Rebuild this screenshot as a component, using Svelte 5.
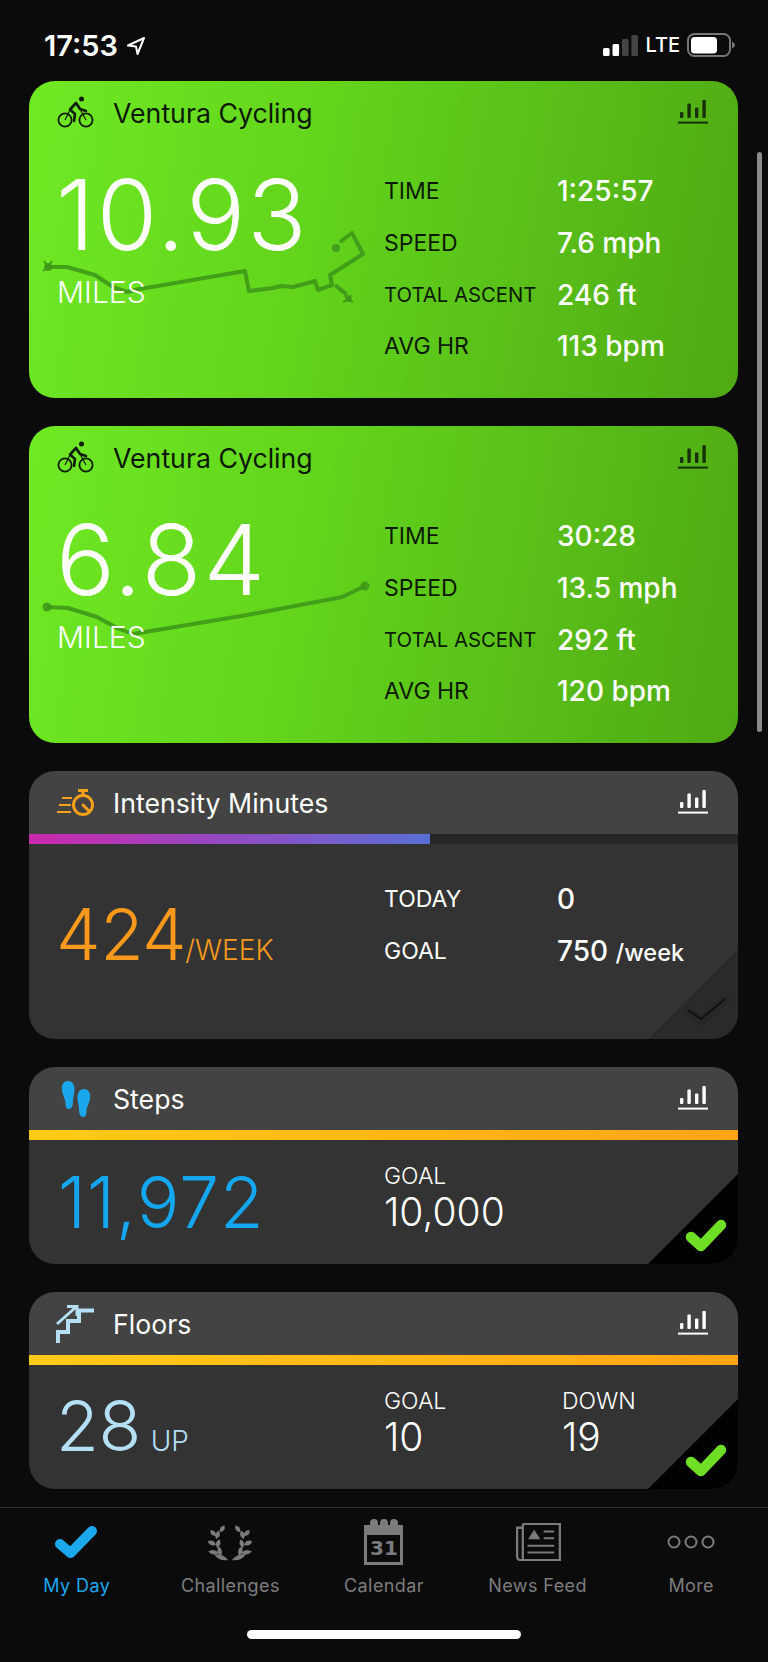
<script>
  const rides = [
    {
      distance: "10.93",
      route: "19,186 38,186 66,194 84,206 98,211 111,208 216,190 220,210 244,207 252,205 264,206 286,200 289,209 303,204 301,194 334,173 323,152 311,161",
      branch: "306,204 316,212 319,219",
      spikes: "M19 186 L15 180 M19 186 L23 180 M19 186 L14 190 M319 219 L314 221 M319 219 L324 221 M319 219 L322 214 M314 212 L310 208",
      ends: [[307, 167, 4], [19, 186, 4], [320, 218, 3]],
      stats: [["TIME", "1:25:57"], ["SPEED", "7.6 mph"], ["TOTAL ASCENT", "246 ft"], ["AVG HR", "113 bpm"]],
    },
    {
      distance: "6.84",
      route: "18,181 39,182 68,191 88,202 104,208 218,189 313,171 336,160",
      branch: "",
      spikes: "",
      ends: [[18, 181, 4.5], [336, 160, 4.5]],
      stats: [["TIME", "30:28"], ["SPEED", "13.5 mph"], ["TOTAL ASCENT", "292 ft"], ["AVG HR", "120 bpm"]],
    },
  ];

  const tabs = ["My Day", "Challenges", "Calendar", "News Feed", "More"];
  // base x, base y, angle, length of each laurel leaf on the right branch
  const leaves = [
    [2, 18, -22, 15], [9, 14, -75, 10], [11, 11, -8, 11], [13, 6, -105, 9],
    [14, 3, -25, 9], [14, -3, -110, 9], [14, -6, -45, 8], [10, -10, -125, 8],
  ];
</script>

{#snippet chart()}
  <svg class="chart" viewBox="0 0 30 24" width="30" height="24">
    <rect x="2" y="12" width="3.4" height="6" rx="1" />
    <rect x="9.4" y="3.5" width="3.4" height="14.5" rx="1" />
    <rect x="17" y="7.5" width="3.4" height="10.5" rx="1" />
    <rect x="24.4" y="0" width="3.4" height="18" rx="1" />
    <rect x="0" y="21.6" width="30" height="2" />
  </svg>
{/snippet}

{#snippet bike()}
  <svg class="icon" viewBox="0 0 40 36" width="40" height="36">
    <g fill="none" stroke="#0d1f06" stroke-width="1.8">
      <circle cx="9" cy="25" r="6.6" />
      <circle cx="30" cy="25" r="6.6" />
    </g>
    <circle cx="25.5" cy="4" r="2.5" fill="#0d1f06" />
    <path d="M20 8 L14 14.500 L19 19 L18 26 M20 8 L24 14 L30 16" fill="none" stroke="#0d1f06" stroke-width="2.6" stroke-linejoin="round" stroke-linecap="round" />
    <path d="M9 25 L14 15 M24 14 L30 25" fill="none" stroke="#0d1f06" stroke-width="1.2" />
  </svg>
{/snippet}

{#snippet goalCorner(done)}
  <svg class="corner" viewBox="0 0 90 90" width="90" height="90">
    <polygon points="90,0 90,90 0,90" fill={done ? "#000" : "#2a2a2a"} />
    {#if done}
      <polyline points="43,63 53,72 73,51" fill="none" stroke="#6fdf26" stroke-width="10.500" stroke-linejoin="round" stroke-linecap="round" />
    {:else}
      <polyline points="41,62 53,72 77,51" fill="none" stroke="#272727" stroke-width="9" stroke-linecap="round" />
      <polyline points="40,61 53,70 77,50" fill="none" stroke="#111" stroke-width="2" />
    {/if}
  </svg>
{/snippet}

<div class="phone">
  <header class="status">
    <div class="clock">
      <span>17:53</span>
      <svg viewBox="0 0 20 20" width="20" height="20">
        <path d="M18 2 L2 9.5 L10 10.5 L11.5 18 Z" fill="none" stroke="#fff" stroke-width="2" stroke-linejoin="round" />
      </svg>
    </div>
    <div class="signal">
      <svg viewBox="0 0 35 21" width="35" height="21">
        <rect x="0" y="13" width="6.6" height="8" rx="1.5" fill="#fff" />
        <rect x="9.5" y="9" width="6.6" height="12" rx="1.5" fill="#fff" />
        <rect x="19" y="4" width="6.6" height="17" rx="1.5" fill="#444" />
        <rect x="28.4" y="0" width="6.6" height="21" rx="1.5" fill="#444" />
      </svg>
      <span class="lte">LTE</span>
      <svg viewBox="0 0 48 24" width="48" height="24">
        <rect x="1" y="1" width="42" height="22" rx="6.5" fill="none" stroke="#777" stroke-width="2" />
        <rect x="4" y="4" width="26" height="16.5" rx="3.5" fill="#fff" />
        <path d="M45 8.5 Q48 10 48 12 Q48 14 45 15.5 Z" fill="#777" />
      </svg>
    </div>
  </header>

  <main class="cards">
    {#each rides as ride}
      <section class="card ride">
        <svg class="route" viewBox="0 0 709 317" width="709" height="317">
          <polyline points={ride.route} />
          {#if ride.branch}<polyline points={ride.branch} />{/if}
          {#if ride.spikes}<path d={ride.spikes} />{/if}
          {#each ride.ends as [cx, cy, r]}
            <circle {cx} {cy} {r} />
          {/each}
        </svg>
        <div class="head">
          {@render bike()}
          <h2>Ventura Cycling</h2>
          {@render chart()}
        </div>
        <div class="ride-body">
          <div class="distance">
            <div class="big">{ride.distance}</div>
            <div class="unit">MILES</div>
          </div>
          <dl class="stats">
            {#each ride.stats as [label, value]}
              <dt class:small={label.length > 10}>{label}</dt>
              <dd>{value}</dd>
            {/each}
          </dl>
        </div>
      </section>
    {/each}

    <section class="card dark">
      <div class="head">
        <svg class="icon" viewBox="0 0 40 36" width="40" height="36">
          <g fill="none" stroke="#f7a01a" stroke-width="3">
            <circle cx="27" cy="20" r="9.500" />
            <path d="M6 13 H16 M3 20 H15 M1 27 H15" stroke-width="2" />
            <path d="M27 20 L33 26" stroke-linecap="round" />
            <path d="M22 5.500 H32 M27 5 V10" />
          </g>
        </svg>
        <h2>Intensity Minutes</h2>
        {@render chart()}
      </div>
      <div class="track"><div class="fill purple" style="width: 56.6%"></div></div>
      <div class="body tall">
        <div class="reading">
          <span class="big orange">424</span><span class="suffix orange">/WEEK</span>
        </div>
        <dl class="stats">
          <dt>TODAY</dt>
          <dd>0</dd>
          <dt>GOAL</dt>
          <dd>750 <span class="per">/week</span></dd>
        </dl>
        {@render goalCorner(false)}
      </div>
    </section>

    <section class="card dark">
      <div class="head">
        <svg class="icon" viewBox="0 0 40 36" width="40" height="36">
          <g fill="#1ba7ec">
            <path d="M12 0 C17 0 19 5 18.500 10 C18 14 17 17 17 20 C17 25 15.500 28 13 28 C10 28 9.500 25 9.500 22 C9.500 18 6 13 5.800 8 C5.600 3 8 0 12 0 Z" />
            <path d="M12 0 C17 0 19 5 18.500 10 C18 14 17 17 17 20 C17 25 15.500 28 13 28 C10 28 9.500 25 9.500 22 C9.500 18 6 13 5.800 8 C5.600 3 8 0 12 0 Z" transform="translate(40 8) scale(-1 1)" />
          </g>
        </svg>
        <h2>Steps</h2>
        {@render chart()}
      </div>
      <div class="track"><div class="fill amber" style="width: 100%"></div></div>
      <div class="body">
        <div class="reading"><span class="big blue wide">11,972</span></div>
        <div class="pair">
          <div class="label">GOAL</div>
          <div class="amount">10,000</div>
        </div>
        {@render goalCorner(true)}
      </div>
    </section>

    <section class="card dark">
      <div class="head">
        <svg class="icon" viewBox="0 0 40 40" width="40" height="40">
          <g fill="none" stroke="#b5dff5" stroke-width="4">
            <path d="M38 6.500 H23 V17 H12 V28 H2 V39" />
            <path d="M1 20 L20 3" stroke-width="3" />
            <path d="M11 2.500 H21 V12" stroke-width="3" />
          </g>
        </svg>
        <h2>Floors</h2>
        {@render chart()}
      </div>
      <div class="track"><div class="fill amber" style="width: 100%"></div></div>
      <div class="body">
        <div class="reading">
          <span class="big sky">28</span><span class="suffix sky up">UP</span>
        </div>
        <div class="pair">
          <div class="label">GOAL</div>
          <div class="amount">10</div>
        </div>
        <div class="pair down">
          <div class="label">DOWN</div>
          <div class="amount">19</div>
        </div>
        {@render goalCorner(true)}
      </div>
    </section>
  </main>

  <nav class="tabs">
    {#each tabs as tab, i}
      <div class="tab" class:active={i === 0}>
        <div class="glyph">
          {#if i === 0}
            <svg viewBox="0 0 48 40" width="48" height="40">
              <polyline points="7,22 17.500,31 39,9" fill="none" stroke="#1ba7ec" stroke-width="10" stroke-linejoin="round" stroke-linecap="round" />
            </svg>
          {:else if i === 1}
            <svg viewBox="-24 -20 48 40" width="48" height="40" fill="#7b7b7b">
              {#each [1, -1] as side}
                <g transform="scale({side} 1)">
                  {#each leaves as [x, y, a, l]}
                    <path d="M0 0 Q{l / 2} -4.500 {l} 0 Q{l / 2} 4.500 0 0 Z" transform="translate({x} {y}) rotate({a})" />
                  {/each}
                </g>
              {/each}
            </svg>
          {:else if i === 2}
            <div class="calendar">
              <svg viewBox="0 0 39 46" width="39" height="46">
                <path d="M0 6 H6 V4 a3 3 0 0 1 8 0 V6 H16 V4 a3 3 0 0 1 8 0 V6 H26 V4 a3 3 0 0 1 8 0 V6 H39 V46 H0 Z M3 16 V43 H36 V16 Z" fill="#7b7b7b" fill-rule="evenodd" />
              </svg>
              <span>31</span>
            </div>
          {:else if i === 3}
            <svg viewBox="0 0 48 40" width="46" height="38">
              <path d="M8 5 H2 V35 Q2 39 6 39 H47 M8 1 H47 V39 H8 V1" fill="none" stroke="#7b7b7b" stroke-width="2.4" />
              <polygon points="20,7 26.500,17 13.500,17" fill="#7b7b7b" />
              <path d="M30 9 H41 M30 16 H41 M13 24 H41 M13 31 H41" stroke="#7b7b7b" stroke-width="2.2" />
            </svg>
          {:else}
            <svg viewBox="0 0 48 16" width="48" height="16">
              <g fill="none" stroke="#7b7b7b" stroke-width="2">
                <circle cx="7" cy="8" r="5.500" />
                <circle cx="24" cy="8" r="5.500" />
                <circle cx="41" cy="8" r="5.500" />
              </g>
            </svg>
          {/if}
        </div>
        <div class="tab-label">{tab}</div>
      </div>
    {/each}
  </nav>
  <div class="home-row"><div class="home"></div></div>
  <div class="scrollbar"></div>
</div>

<style>
  :global(body) {
    background: #0b0b0c;
  }
  .phone {
    position: relative;
    width: 768px;
    height: 1662px;
    overflow: hidden;
    background: #0b0b0c;
    color: #fff;
    font-family: Inter, "Liberation Sans", sans-serif;
    display: flex;
    flex-direction: column;
  }
  .status {
    height: 81px;
    flex: none;
    display: flex;
    justify-content: space-between;
    align-items: flex-start;
    padding: 30px 33px 0 44px;
    box-sizing: border-box;
  }
  .clock {
    display: flex;
    align-items: center;
    gap: 8px;
    font-size: 29px;
    font-weight: 600;
    line-height: 32px;
  }
  .signal {
    display: flex;
    align-items: center;
    gap: 7px;
    padding-top: 3px;
    height: 24px;
  }
  .lte {
    font-size: 20px;
    font-weight: 500;
  }
  .cards {
    display: flex;
    flex-direction: column;
    gap: 28px;
    padding: 0 30px 18px 29px;
    flex: none;
  }
  .card {
    position: relative;
    border-radius: 26px;
    overflow: hidden;
  }
  .ride {
    height: 317px;
    background: linear-gradient(100deg, #70e924 0%, #62d41c 40%, #4fa914 100%);
    color: #0b1a05;
  }
  .route {
    position: absolute;
    left: 0;
    top: 0;
  }
  .route polyline,
  .route path {
    fill: none;
    stroke: #3d9418;
    stroke-opacity: 0.85;
    stroke-width: 4;
    stroke-linejoin: round;
  }
  .route path {
    stroke-width: 2;
  }
  .route circle {
    fill: #3d9418;
    fill-opacity: 0.85;
  }
  .head {
    position: relative;
    height: 63px;
    display: flex;
    align-items: center;
    padding: 0 30px 0 27px;
  }
  .head h2 {
    flex: 1;
    margin: 1px 0 0 17px;
    font-size: 26.700px;
    font-weight: 400;
    line-height: 34px;
  }
  .icon {
    flex: none;
  }
  .chart {
    flex: none;
    fill: currentColor;
    margin-bottom: 2px;
  }
  .ride .chart {
    fill: #16300a;
  }
  .ride-body {
    position: relative;
    display: grid;
    grid-template-columns: 326px 1fr;
    padding: 0 0 0 29px;
  }
  .distance {
    padding-top: 23px;
  }
  .big {
    margin-left: -2px;
    font-size: 98px;
    line-height: 95px;
    font-weight: 350;
    color: #fff;
    letter-spacing: 2.200px;
  }
  .unit {
    margin-top: 14px;
    margin-left: -1px;
    font-size: 30px;
    line-height: 32px;
    font-weight: 300;
    color: #fff;
  }
  .stats {
    margin: 21.500px 0 0;
    display: grid;
    grid-template-columns: 173px 1fr;
    grid-auto-rows: 51.700px;
    align-items: center;
  }
  dt {
    font-size: 23px;
    font-weight: 400;
  }
  dt.small {
    font-size: 20.300px;
  }
  dd {
    margin: 0;
    font-size: 28px;
    font-weight: 500;
    color: #fff;
  }
  .per {
    font-size: 23.500px;
  }
  .dark .head {
    background: #434343;
  }
  .track {
    height: 10px;
    background: #262626;
  }
  .fill {
    height: 100%;
  }
  .purple {
    background: linear-gradient(90deg, #cb28ae, #5a6fd6);
  }
  .amber {
    background: linear-gradient(90deg, #fdcb17, #fda414);
  }
  .body {
    position: relative;
    height: 124px;
    background: #333;
    display: grid;
    grid-template-columns: 326px 178px 1fr;
    padding-left: 29px;
    align-items: center;
  }
  .body.tall {
    height: 195px;
    grid-template-columns: 326px 1fr;
    align-items: start;
  }
  .body.tall .reading {
    padding-top: 54px;
  }
  .body.tall .stats {
    margin-top: 29px;
  }
  .reading {
    display: flex;
    align-items: baseline;
  }
  .reading .big {
    font-size: 71px;
    line-height: 72px;
    letter-spacing: -0.500px;
  }
  .reading .big.wide {
    margin-left: 0;
    letter-spacing: 1.100px;
  }
  .suffix {
    font-size: 28px;
    font-weight: 300;
    margin-left: -1px;
  }
  .up {
    margin-left: 10px;
  }
  .orange {
    color: #f9991c;
  }
  .blue {
    color: #14a6ee;
  }
  .sky {
    color: #b5dff5;
  }
  .reading .big.sky {
    font-size: 70px;
    margin-top: -3px;
  }
  .pair {
    padding-bottom: 8px;
  }
  .label {
    font-size: 23px;
    line-height: 27px;
    font-weight: 300;
  }
  .amount {
    font-size: 39px;
    line-height: 44px;
    font-weight: 350;
  }
  .corner {
    position: absolute;
    right: 0;
    bottom: 0;
  }
  .tabs {
    flex: none;
    border-top: 1px solid #333;
    height: 110px;
    display: grid;
    grid-template-columns: repeat(5, 1fr);
  }
  .tab {
    display: flex;
    flex-direction: column;
    align-items: center;
    color: #7d7d7d;
  }
  .tab.active {
    color: #1ba7ec;
  }
  .glyph {
    height: 50px;
    margin-top: 9px;
    display: flex;
    align-items: center;
    justify-content: center;
  }
  .calendar {
    position: relative;
    width: 39px;
    height: 46px;
  }
  .calendar span {
    position: absolute;
    left: 0;
    right: 0;
    top: 17px;
    text-align: center;
    font-size: 20px;
    line-height: 24px;
    font-weight: 700;
    color: #7b7b7b;
    font-family: "DejaVu Sans", sans-serif;
  }
  .tab-label {
    margin-top: 7px;
    font-size: 18px;
    line-height: 24px;
    letter-spacing: 0.400px;
  }
  .home-row {
    flex: 1;
    display: flex;
    justify-content: center;
  }
  .home {
    margin-top: 12px;
    width: 274px;
    height: 9px;
    border-radius: 5px;
    background: #fff;
  }
  .scrollbar {
    position: absolute;
    left: 757px;
    top: 152px;
    width: 5px;
    height: 580px;
    border-radius: 3px;
    background: #8a8a8a;
  }
</style>
